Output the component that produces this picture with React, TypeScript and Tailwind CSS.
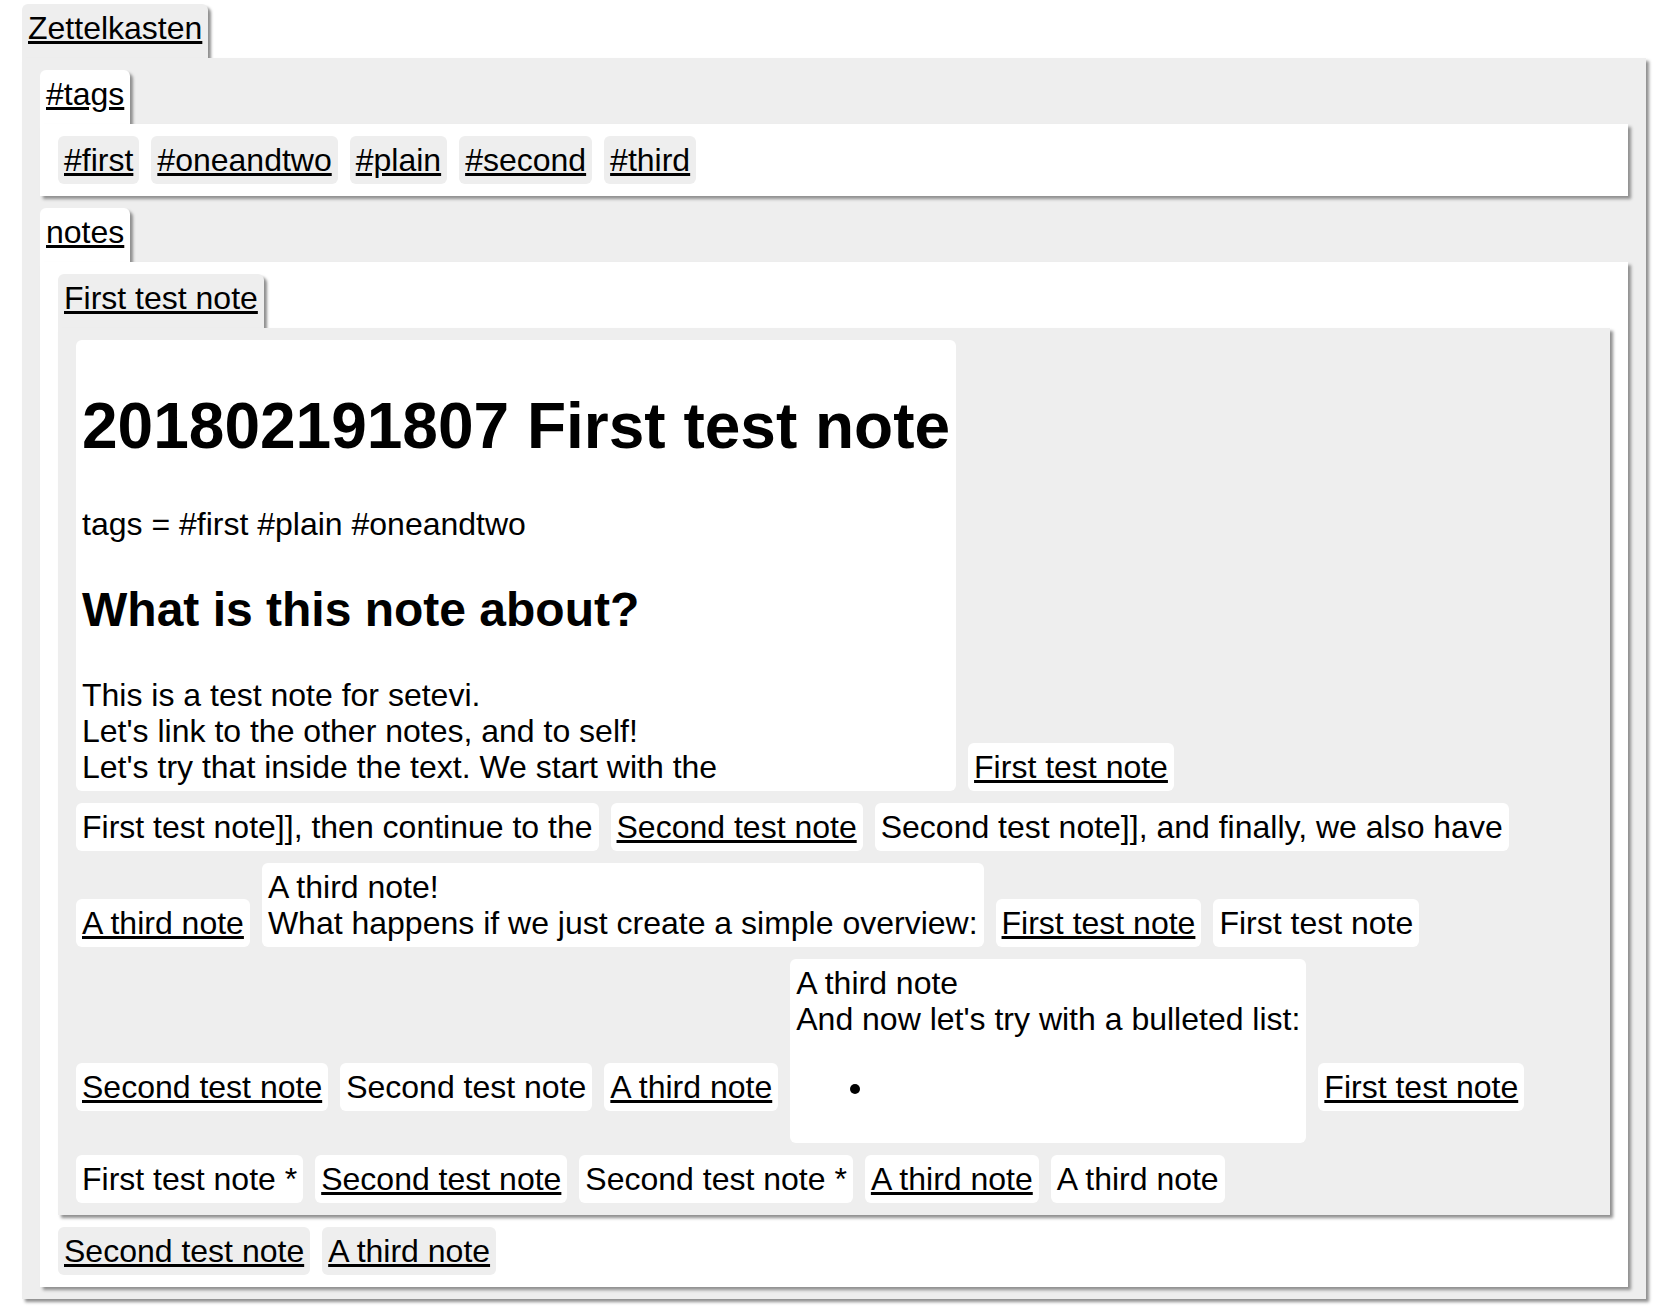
import type { ReactNode } from "react";

type Tone = "gray" | "white";

const bg = (tone: Tone) => (tone === "gray" ? "bg-[#eeeeee]" : "bg-white");

function Tab({ label, tone }: { label: string; tone: Tone }) {
  return (
    <div
      className={`w-fit rounded-t-[6px] px-[6px] pt-[6px] pb-[12px] shadow-[3px_3px_3px_#8f8f8f] ${bg(tone)}`}
    >
      <span className="underline">{label}</span>
    </div>
  );
}

function Panel({ tone, children }: { tone: Tone; children: ReactNode }) {
  return (
    <div className={`px-[18px] py-[12px] shadow-[3px_3px_3px_#8f8f8f] ${bg(tone)}`}>
      {children}
    </div>
  );
}

// chips sit inline so that tall neighbours line up on their last text line
function Chip({ label, link, tone = "white" }: { label: string; link?: boolean; tone?: Tone }) {
  return (
    <div className={`mr-3 inline-block rounded-[6px] p-[6px] align-baseline ${bg(tone)}`}>
      <span className={link ? "underline" : ""}>{label}</span>
    </div>
  );
}

function Box({ children }: { children: ReactNode }) {
  return (
    <div className="mr-3 inline-block rounded-[6px] bg-white p-[6px] align-baseline">{children}</div>
  );
}

function Row({ children }: { children: ReactNode }) {
  return <div className="whitespace-nowrap">{children}</div>;
}

const tags = ["#first", "#oneandtwo", "#plain", "#second", "#third"];

export default function App() {
  return (
    <div className="min-h-screen bg-white pt-[4px] pl-[22px] pr-[16px] text-[32px] leading-[36px] text-black font-['Liberation_Sans',Arial,sans-serif]">
      <Tab label="Zettelkasten" tone="gray" />
      <Panel tone="gray">
        <Tab label="#tags" tone="white" />
        <Panel tone="white">
          <div className="flex gap-3">
            {tags.map((t) => (
              <div key={t} className="rounded-[6px] bg-[#eeeeee] p-[6px]">
                <span className="underline">{t}</span>
              </div>
            ))}
          </div>
        </Panel>

        <div className="mt-[12px]">
          <Tab label="notes" tone="white" />
        </div>
        <Panel tone="white">
          <Tab label="First test note" tone="gray" />
          <Panel tone="gray">
            <div className="flex flex-col gap-3">
              <Row>
                <Box>
                  <h1 className="my-[43px] text-[64px] leading-[74px] font-bold">
                    201802191807 First test note
                  </h1>
                  <p>tags = #first #plain #oneandtwo</p>
                  <h2 className="my-[40px] text-[48px] leading-[55px] font-bold">
                    What is this note about?
                  </h2>
                  <div>
                    This is a test note for setevi.
                    <br />
                    Let's link to the other notes, and to self!
                    <br />
                    Let's try that inside the text. We start with the
                  </div>
                </Box>
                <Chip label="First test note" link />
              </Row>

              <Row>
                <Chip label="First test note]], then continue to the" />
                <Chip label="Second test note" link />
                <Chip label="Second test note]], and finally, we also have" />
              </Row>

              <Row>
                <Chip label="A third note" link />
                <Box>
                  A third note!
                  <br />
                  What happens if we just create a simple overview:
                </Box>
                <Chip label="First test note" link />
                <Chip label="First test note" />
              </Row>

              <Row>
                <Chip label="Second test note" link />
                <Chip label="Second test note" />
                <Chip label="A third note" link />
                <Box>
                  A third note
                  <br />
                  And now let's try with a bulleted list:
                  <ul className="my-[32px] list-disc pl-[80px]">
                    <li>{"\u00a0"}</li>
                  </ul>
                </Box>
                <Chip label="First test note" link />
              </Row>

              <Row>
                <Chip label="First test note *" />
                <Chip label="Second test note" link />
                <Chip label="Second test note *" />
                <Chip label="A third note" link />
                <Chip label="A third note" />
              </Row>
            </div>
          </Panel>

          <div className="mt-[12px] flex gap-3">
            <div className="rounded-[6px] bg-[#eeeeee] p-[6px]">
              <span className="underline">Second test note</span>
            </div>
            <div className="rounded-[6px] bg-[#eeeeee] p-[6px]">
              <span className="underline">A third note</span>
            </div>
          </div>
        </Panel>
      </Panel>
    </div>
  );
}
